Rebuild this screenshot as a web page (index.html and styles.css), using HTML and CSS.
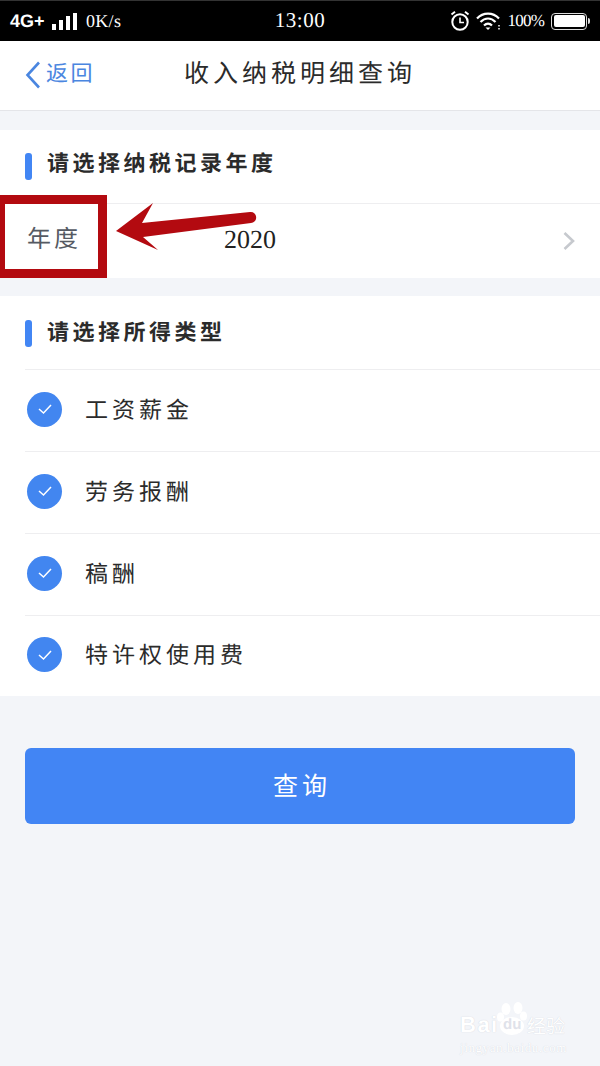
FILE: index.html
```html
<!DOCTYPE html>
<html lang="zh-CN">
<head>
<meta charset="utf-8">
<title>收入纳税明细查询</title>
<link rel="stylesheet" href="styles.css">
</head>
<body>
<div class="page">
  <header class="status">
    <div class="status-left">
      <span class="net">4G+</span>
      <span class="signal"><i class="s1"></i><i class="s2"></i><i class="s3"></i><i class="s4"></i></span>
      <span class="speed">0K/s</span>
    </div>
    <div class="clock">13:00</div>
    <div class="status-right">
      <svg class="alarm" width="20" height="22" viewBox="0 0 20 22" fill="none" stroke="#fff"><circle cx="10" cy="12" r="7.7" stroke-width="2"/><path d="M10 7.500V12.500H14" stroke-width="1.600"/><path d="M1.500 4.500 5 1.800M18.500 4.500 15 1.800" stroke-width="2"/></svg>
      <svg class="wifi" width="26" height="20" viewBox="0 0 26 20" fill="none" stroke="#fff" stroke-width="2.200"><path d="M1 7.500C7 1 17 1 23 7.500"/><path d="M4.500 11C9 6.300 15 6.300 19.500 11"/><path d="M8 14.500C10.500 12 13.500 12 16 14.500"/><path d="M9.500 16.500 12 19 14.500 16.500Z" fill="#fff" stroke="none"/><path d="M23 14v1.500M23 17v1.500" stroke-width="1.500"/></svg>
      <span class="pct">100%</span>
      <span class="battery"><span class="battery-fill"></span></span>
    </div>
  </header>

  <nav class="nav">
    <div class="back">
      <svg width="16" height="28" viewBox="0 0 16 28" fill="none" stroke="#4a86e0" stroke-width="2.600"><path d="M14 1.500 2.500 14 14 26.500"/></svg>
      <span class="back-text">返回</span>
    </div>
    <h1 class="nav-title">收入纳税明细查询</h1>
  </nav>

  <section class="card card-year">
    <h2 class="sec-title"><span class="sec-text">请选择纳税记录年度</span></h2>
    <div class="year-row">
      <span class="year-label">年度</span>
      <span class="year-value">2020</span>
      <svg class="chev" width="14" height="20" viewBox="0 0 14 20" fill="none" stroke="#c6c9ce" stroke-width="2.600"><path d="M2.500 2 11 10 2.500 18"/></svg>
    </div>
  </section>

  <section class="card card-type">
    <h2 class="sec-title"><span class="sec-text">请选择所得类型</span></h2>
    <ul class="types">
      <li class="type"><span class="check"><svg width="16" height="12" viewBox="0 0 16 12" fill="none" stroke="#fff" stroke-width="1.500"><path d="M2 6 6.500 10 14 2"/></svg></span>工资薪金</li>
      <li class="type"><span class="check"><svg width="16" height="12" viewBox="0 0 16 12" fill="none" stroke="#fff" stroke-width="1.500"><path d="M2 6 6.500 10 14 2"/></svg></span>劳务报酬</li>
      <li class="type"><span class="check"><svg width="16" height="12" viewBox="0 0 16 12" fill="none" stroke="#fff" stroke-width="1.500"><path d="M2 6 6.500 10 14 2"/></svg></span>稿酬</li>
      <li class="type"><span class="check"><svg width="16" height="12" viewBox="0 0 16 12" fill="none" stroke="#fff" stroke-width="1.500"><path d="M2 6 6.500 10 14 2"/></svg></span>特许权使用费</li>
    </ul>
  </section>

  <button class="query">查询</button>

  <div class="redbox"></div>
  <svg class="arrow" width="150" height="55" viewBox="0 0 150 55"><path d="M1 28 38 0 27 20 135 9C142 8 144 19 136 20L28 34 43 47Z" fill="#b30a10"/></svg>

  <div class="watermark">
    <svg class="paw" width="30" height="40" viewBox="0 0 30 40" fill="#fff"><ellipse cx="9" cy="7" rx="4.500" ry="6"/><ellipse cx="21" cy="6" rx="4.500" ry="6"/><ellipse cx="3.500" cy="15" rx="3.500" ry="4.500"/><ellipse cx="26.500" cy="14" rx="3.500" ry="4.500"/><ellipse cx="15" cy="24" rx="12" ry="9"/></svg>
    <div class="wm-top"><span class="wm-bai">Bai</span><span class="wm-du">du</span><span class="wm-jy">经验</span></div>
    <div class="wm-url">jingyan.baidu.com</div>
  </div>
</div>
</body>
</html>
```
FILE: styles.css
```css
* { box-sizing: border-box; }
html, body { margin: 0; padding: 0; }
body { font-family: "Noto Sans CJK SC", "Noto Sans CJK TC", "Noto Sans", sans-serif; background: #f3f5f9; text-rendering: geometricPrecision; }
.page { position: relative; width: 600px; height: 1066px; overflow: hidden; background: #f3f5f9; }

.status { display: grid; grid-template-columns: 1fr auto 1fr; align-items: center; height: 41px; padding: 0 10px; background: #000; color: #fff; border-top: 1px solid #333; }
.status-left { display: flex; align-items: center; }
.net { font: bold 18px "Liberation Sans", sans-serif; width: 42px; }
.signal { display: flex; align-items: flex-end; gap: 3px; height: 17px; width: 34px; }
.signal i { display: block; width: 4px; background: #fff; }
.s1 { height: 6px; }
.s2 { height: 10px; }
.s3 { height: 14px; }
.s4 { height: 17px; }
.speed { font: 18px "Liberation Serif", serif; letter-spacing: 0.3px; }
.clock { font: 21px "Liberation Serif", serif; letter-spacing: 0.5px; padding-bottom: 2px; }
.status-right { display: flex; align-items: center; justify-content: flex-end; gap: 6px; }
.pct { font: 17px "Liberation Serif", serif; letter-spacing: -0.8px; }
.battery { position: relative; display: block; width: 36px; height: 17px; border: 1.500px solid #ddd; border-radius: 4px; padding: 1.500px; margin-left: 1px; margin-right: 3px; }
.battery::after { content: ""; position: absolute; right: -4px; top: 4px; width: 2px; height: 6px; background: #ddd; border-radius: 0 2px 2px 0; }
.battery-fill { display: block; height: 100%; background: #fff; border-radius: 2px; }

.nav { position: relative; display: flex; align-items: center; justify-content: center; height: 70px; background: #fff; border-bottom: 1px solid #e4e5e9; }
.back { position: absolute; left: 25px; top: 20px; height: 28px; display: flex; align-items: center; gap: 5px; color: #4a86e0; font-size: 22px; letter-spacing: 2.500px; line-height: 28px; }
.back-text { margin-bottom: 6px; }
.nav-title { margin: 0; font-size: 25px; font-weight: 400; letter-spacing: 4px; color: #2b2b2b; line-height: 36px; padding-bottom: 7px; }

.card { background: #fff; }
.card-year { margin-top: 19px; }
.card-type { margin-top: 18px; }
.sec-title { display: flex; align-items: center; height: 73px; margin: 0; padding-left: 25px; font-size: 22px; font-weight: 700; letter-spacing: 3.500px; color: #2b2b2b; }
.sec-title::before { content: ""; width: 7px; height: 27px; margin-right: 15px; border-radius: 3px; background: #4286f4; }
.sec-text { margin-bottom: 10px; }
.card-type .sec-title { padding-top: 2px; }
.card-type .sec-text { margin-bottom: 6px; }

.year-row { display: flex; align-items: center; height: 75px; padding: 0 24px 0 27px; border-top: 1px solid #eeeef0; }
.year-label { width: 197px; font-size: 24px; letter-spacing: 3px; color: #555a63; margin-bottom: 10px; }
.year-value { flex: 1; font: 26px "Liberation Serif", serif; color: #222; margin-bottom: 3px; }

.types { margin: 0; padding: 0; list-style: none; }
.type { display: flex; align-items: center; gap: 23px; height: 82px; margin-left: 25px; border-top: 1px solid #eeeef0; padding: 0 0 6px 2px; font-size: 23px; letter-spacing: 4px; color: #2b2b2b; }
.type:last-child { height: 81px; }
.check { display: flex; align-items: center; justify-content: center; width: 35px; height: 35px; margin-top: 3px; border-radius: 50%; background: #4286f0; }

.query { display: block; width: 550px; height: 76px; margin: 52px 25px 0; padding: 0 0 4px 4px; border: 0; border-radius: 6px; background: #4285f4; color: #fff; font-family: inherit; font-size: 25px; letter-spacing: 4px; }

.redbox { position: absolute; left: 0; top: 195px; width: 107px; height: 83px; border: solid #b30a10; border-width: 9px 9px 9px 5px; }
.arrow { position: absolute; left: 115px; top: 203px; }

.watermark { position: absolute; left: 460px; top: 1000px; width: 110px; color: #fff; }
.paw { position: absolute; left: 37px; top: 2px; }
.wm-top { position: relative; display: flex; align-items: center; height: 20px; margin-top: 15px; font: bold 22px "Liberation Sans", sans-serif; line-height: 20px; text-shadow: 0 0 1px #c8ccd6; }
.wm-bai { width: 43px; letter-spacing: 1.500px; }
.wm-du { width: 24px; color: #dfe2ea; font-size: 15px; text-shadow: none; }
.wm-jy { font: 400 19px "Noto Sans CJK SC", sans-serif; }
.wm-url { position: relative; margin-top: 5px; font: 13px "Liberation Serif", serif; letter-spacing: 0.6px; line-height: 15px; text-shadow: 0 0 1px #c8ccd6; }
```
